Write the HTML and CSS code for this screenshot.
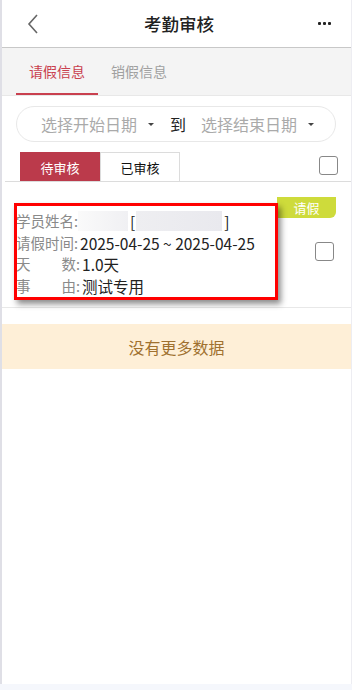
FILE: index.html
```html
<!DOCTYPE html>
<html lang="zh-CN">
<head>
  <meta charset="UTF-8" />
  <meta name="viewport" content="width=device-width, initial-scale=1.0"/>
  <title>考勤审核</title>
  <link rel="stylesheet" href="styles.css">
</head>
<body>
  <div class="page">
    <!-- 顶部导航 -->
    <header class="nav-bar">
      <a class="nav-back" href="#">
        <svg width="12" height="20" viewBox="0 0 12 20"><path d="M10 1 L2 10 L10 19" fill="none" stroke="#666" stroke-width="1.6"/></svg>
      </a>
      <h1 class="nav-title">考勤审核</h1>
      <span class="nav-more">
        <i></i><i></i><i></i>
      </span>
    </header>

    <div class="tabs">
      <span class="tab active">请假信息</span>
      <span class="tab">销假信息</span>
    </div>

    <div class="date-range">
      <span class="date-pick">选择开始日期<b class="caret"></b></span>
      <span class="date-to">到</span>
      <span class="date-pick">选择结束日期<b class="caret"></b></span>
    </div>

    <div class="status-bar">
      <div class="status-tabs">
        <span class="status on">待审核</span>
        <span class="status">已审核</span>
      </div>
      <span class="check"></span>
    </div>

    <div class="record">
      <span class="badge">请假</span>
      <div class="record-info">
        <div class="row"><span class="label">学员姓名:</span><span class="blur blur-name"></span><span class="value">[</span><span class="blur blur-id"></span><span class="value">]</span></div>
        <div class="row"><span class="label">请假时间:</span><span class="value">2025-04-25 ~ 2025-04-25</span></div>
        <div class="row"><span class="label spread"><em>天</em><em>数</em></span><span class="label">:</span><span class="value">1.0天</span></div>
        <div class="row"><span class="label spread"><em>事</em><em>由</em></span><span class="label">:</span><span class="value">测试专用</span></div>
      </div>
      <span class="check record-check"></span>
      <div class="highlight"></div>
    </div>

    <div class="no-more">没有更多数据</div>
  </div>
</body>
</html>
```

FILE: styles.css
```css
body {
  margin: 0;
  font-family: "Microsoft YaHei", "Noto Sans CJK SC", "Liberation Sans", sans-serif;
  background-color: #f5f7fc;
}
.page {
  height: 684px;
  background-color: white;
  border-left: 2px solid #dfdfe6;
  border-right: 1px solid #ededf2;
  box-sizing: border-box;
}
.nav-bar {
  height: 47px;
  display: flex;
  align-items: center;
  justify-content: space-between;
  padding: 0 20px 0 25px;
  border-bottom: 1px solid #c8c8c8;
  background-color: white;
}
.nav-back {
  display: flex;
  width: 30px;
}
.nav-title {
  margin: 0;
  font-size: 17.5px;
  font-weight: 500;
  color: #222;
}
.nav-more {
  display: flex;
  gap: 2px;
  width: 30px;
  justify-content: flex-end;
}
.nav-more i {
  width: 3px;
  height: 3px;
  background-color: #222;
  border-radius: 1px;
}
.tabs {
  height: 47px;
  display: flex;
  align-items: stretch;
  padding-left: 14px;
  background-color: #f4f4f4;
  border-bottom: 1px solid #e8e8e8;
}
.tab {
  display: flex;
  align-items: center;
  padding: 0 13px;
  font-size: 14px;
  color: #a0a0a0;
  border-bottom: 2px solid transparent;
  box-sizing: border-box;
}
.tab.active {
  color: #c9404f;
  border-bottom-color: #c9404f;
}
.date-range {
  margin: 10px 15px 0 14px;
  height: 34px;
  border: 1px solid #e8e8e8;
  border-radius: 18px;
  display: flex;
  align-items: center;
  padding-left: 24px;
  font-size: 16px;
  color: #aaa;
}
.date-pick {
  display: flex;
  align-items: center;
}
.caret {
  margin-left: 11px;
  border-left: 3px solid transparent;
  border-right: 3px solid transparent;
  border-top: 3px solid #444;
}
.date-to {
  color: #222;
  margin: 0 15px 0 16px;
}
.status-bar {
  margin: 10px 0 0 3px;
  height: 29px;
  display: flex;
  justify-content: space-between;
  align-items: flex-start;
  padding: 0 13px 0 15px;
  border-bottom: 1px solid #dcdcdc;
}
.status-tabs {
  display: flex;
}
.status {
  width: 80px;
  height: 29px;
  display: flex;
  align-items: center;
  justify-content: center;
  font-size: 13px;
  color: #111;
  border: 1px solid #dcdcdc;
  border-bottom: none;
  box-sizing: border-box;
}
.status.on {
  background-color: #bb3a4b;
  border-color: #bb3a4b;
  color: white;
}
.check {
  width: 19px;
  height: 19px;
  border: 1px solid #888;
  border-radius: 3px;
  box-sizing: border-box;
  margin-top: 4px;
}
.record {
  position: relative;
  height: 126px;
  border-bottom: 1px solid #e8e8e8;
  display: flex;
  justify-content: space-between;
  align-items: flex-start;
  padding: 28px 16px 0 14px;
  box-sizing: border-box;
}
.badge {
  position: absolute;
  top: 15px;
  right: 15px;
  width: 59px;
  height: 21px;
  background-color: #cedb3b;
  color: white;
  font-size: 13px;
  display: flex;
  align-items: center;
  justify-content: center;
  border-radius: 0 0 6px 0;
}
.record-info {
  display: flex;
  flex-direction: column;
}
.row {
  display: flex;
  align-items: center;
  height: 21.7px;
  line-height: 20px;
  font-size: 15.5px;
  color: #222;
}
.label {
  color: #8a8a8a;
  font-size: 14.5px;
}
.spread {
  width: 60px;
  display: flex;
  justify-content: space-between;
}
.spread em {
  font-style: normal;
}
.value {
  margin-left: 2px;
}
.blur {
  height: 20px;
  background: linear-gradient(90deg, #fafafa, #f0f0f3);
}
.blur-name {
  width: 50px;
}
.blur-id {
  width: 86px;
  margin-left: 1px;
  background: linear-gradient(90deg, #eeeef1, #e9e9ee);
}
.record-check {
  margin-top: 32px;
  margin-right: 1px;
}
.highlight {
  position: absolute;
  left: 12px;
  top: 21px;
  width: 264px;
  height: 97px;
  border: 3px solid #ff0000;
  box-sizing: border-box;
  box-shadow: 3px 4px 6px rgba(0, 0, 0, 0.45);
}
.no-more {
  margin-top: 16px;
  height: 45px;
  background-color: #feefd7;
  color: #a0712f;
  font-size: 16px;
  display: flex;
  align-items: center;
  justify-content: center;
}
```
